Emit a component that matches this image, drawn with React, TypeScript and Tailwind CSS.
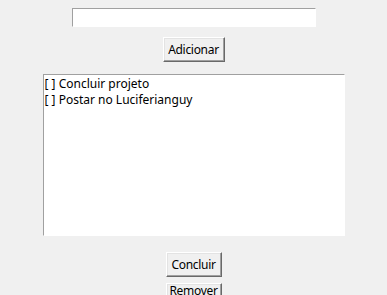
const tasks = ["Concluir projeto", "Postar no Luciferianguy"];

function TkButton({ label, className = "" }: { label: string; className?: string }) {
  return (
    <button
      className={
        "shrink-0 h-[25px] px-0 bg-[#f0f0f0] text-[12px] tracking-[-0.3px] text-black border border-t-white border-l-white border-r-[#696969] border-b-[#696969] shadow-[inset_-1px_-1px_0_#a0a0a0,inset_1px_1px_0_#e3e3e3] " +
        className
      }
    >
      {label}
    </button>
  );
}

export default function App() {
  return (
    <div
      className="w-[387px] h-[295px] overflow-hidden bg-[#f0f0f0] flex flex-col items-center"
      style={{ fontFamily: '"Noto Sans", "DejaVu Sans", sans-serif' }}
    >
      <input
        className="shrink-0 mt-[8px] w-[244px] h-[19px] bg-white outline-none border border-t-[#a0a0a0] border-l-[#a0a0a0] border-r-white border-b-white text-[12px] px-1"
        defaultValue=""
      />
      <TkButton label="Adicionar" className="mt-[10px] w-[62px] leading-none" />
      <div className="shrink-0 mt-[12px] w-[302px] h-[162px] bg-white border border-t-[#a0a0a0] border-l-[#a0a0a0] border-r-white border-b-white pl-[1px] pt-[1px]">
        {tasks.map((t) => (
          <div key={t} className="text-[12px] leading-[16px] text-black whitespace-nowrap">
            [ ] {t}
          </div>
        ))}
      </div>
      <TkButton label="Concluir" className="mt-[16px] w-[56px] leading-none" />
      <TkButton label="Remover" className="mt-[6px] w-[56px] flex items-start justify-center leading-[13px]" />
    </div>
  );
}
